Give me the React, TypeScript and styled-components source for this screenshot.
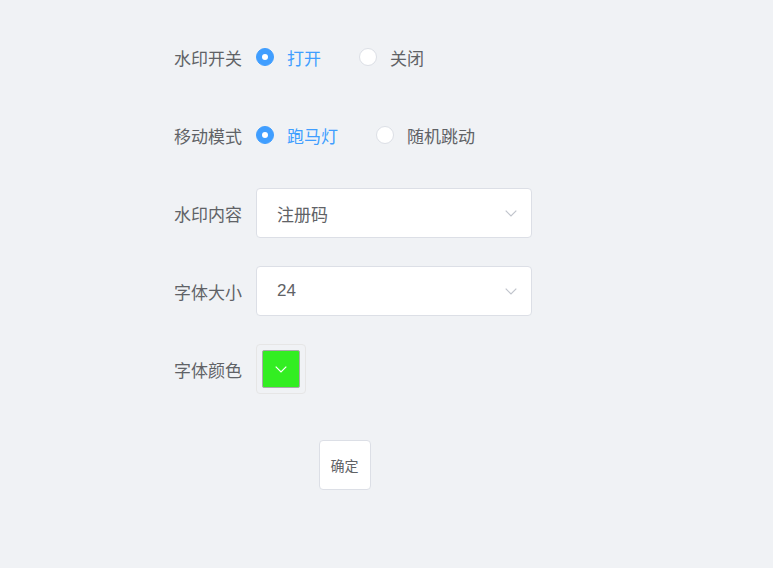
import React, { useState } from 'react'
import styled, { createGlobalStyle } from 'styled-components'

const GlobalStyle = createGlobalStyle`
  html, body {
    margin: 0;
    padding: 0;
    background: #f0f2f5;
  }
  body {
    font-family: "Helvetica Neue", Helvetica, "Liberation Sans", "Noto Sans CJK SC", sans-serif;
    color: #606266;
  }
`

const Page = styled.div`
  min-height: 568px;
  padding: 32px 0 0 157px;
  box-sizing: border-box;
`

const Form = styled.form`
  width: 375px;
  display: flex;
  flex-direction: column;
  gap: 28px;
`

const Item = styled.div`
  display: flex;
  align-items: center;
  height: 50px;
`

const Label = styled.label`
  width: 99px;
  box-sizing: border-box;
  padding-right: 14px;
  text-align: right;
  font-size: 17px;
  color: #606266;
  flex-shrink: 0;
`

const Content = styled.div`
  flex: 1;
  display: flex;
  align-items: center;
`

const RadioWrap = styled.span`
  display: inline-flex;
  align-items: center;
  margin-right: 38px;
  cursor: pointer;
`

const RadioDot = styled.span<{ $checked: boolean }>`
  width: 18px;
  height: 18px;
  box-sizing: border-box;
  border-radius: 50%;
  border: 1px solid ${({ $checked }) => ($checked ? '#409eff' : '#dcdfe6')};
  background: ${({ $checked }) => ($checked ? '#409eff' : '#fff')};
  display: flex;
  align-items: center;
  justify-content: center;

  &::after {
    content: '';
    width: 6px;
    height: 6px;
    border-radius: 50%;
    background: #fff;
    display: ${({ $checked }) => ($checked ? 'block' : 'none')};
  }
`

const RadioText = styled.span<{ $checked: boolean }>`
  padding-left: 13px;
  font-size: 17px;
  color: ${({ $checked }) => ($checked ? '#409eff' : '#606266')};
`

const Select = styled.div`
  width: 276px;
  height: 50px;
  box-sizing: border-box;
  background: #fff;
  border: 1px solid #dcdfe6;
  border-radius: 4px;
  padding: 0 14px 0 20px;
  display: flex;
  align-items: center;
  justify-content: space-between;
  font-size: 17px;
  color: #606266;
`

const Picker = styled.div`
  width: 50px;
  height: 50px;
  box-sizing: border-box;
  border: 1px solid #e6e6e6;
  border-radius: 4px;
  padding: 5px;
`

const Swatch = styled.div<{ $color: string }>`
  width: 100%;
  height: 100%;
  box-sizing: border-box;
  border: 1px solid #aaa;
  border-radius: 2px;
  background: ${({ $color }) => $color};
  display: flex;
  align-items: center;
  justify-content: center;
`

const Footer = styled.div`
  display: flex;
  justify-content: center;
  margin-top: 18px;
`

const Button = styled.button`
  width: 52px;
  height: 50px;
  padding: 0;
  background: #fff;
  border: 1px solid #dcdfe6;
  border-radius: 4px;
  font-family: inherit;
  font-size: 14px;
  color: #606266;
  cursor: pointer;
`

const Arrow = ({ color, size }: { color: string; size: number }) => (
  <svg width={size} height={size / 2 + 1} viewBox="0 0 12 7" fill="none">
    <path d="M0.7 0.7 L6 6 L11.3 0.7" stroke={color} strokeWidth="1.2" />
  </svg>
)

type Option = { value: string; label: string }

function RadioGroup({ options, value, onChange }: { options: Option[]; value: string; onChange: (v: string) => void }) {
  return (
    <>
      {options.map(o => (
        <RadioWrap key={o.value} onClick={() => onChange(o.value)}>
          <RadioDot $checked={o.value === value} />
          <RadioText $checked={o.value === value}>{o.label}</RadioText>
        </RadioWrap>
      ))}
    </>
  )
}

export default function App() {
  const [enabled, setEnabled] = useState('on')
  const [mode, setMode] = useState('marquee')

  return (
    <Page>
      <GlobalStyle />
      <Form onSubmit={e => e.preventDefault()}>
        <Item>
          <Label>水印开关</Label>
          <Content>
            <RadioGroup
              value={enabled}
              onChange={setEnabled}
              options={[
                { value: 'on', label: '打开' },
                { value: 'off', label: '关闭' }
              ]}
            />
          </Content>
        </Item>
        <Item>
          <Label>移动模式</Label>
          <Content>
            <RadioGroup
              value={mode}
              onChange={setMode}
              options={[
                { value: 'marquee', label: '跑马灯' },
                { value: 'random', label: '随机跳动' }
              ]}
            />
          </Content>
        </Item>
        <Item>
          <Label>水印内容</Label>
          <Content>
            <Select>
              <span>注册码</span>
              <Arrow color="#c0c4cc" size={12} />
            </Select>
          </Content>
        </Item>
        <Item>
          <Label>字体大小</Label>
          <Content>
            <Select>
              <span>24</span>
              <Arrow color="#c0c4cc" size={12} />
            </Select>
          </Content>
        </Item>
        <Item>
          <Label>字体颜色</Label>
          <Content>
            <Picker>
              <Swatch $color="#33ee22">
                <Arrow color="#fff" size={12} />
              </Swatch>
            </Picker>
          </Content>
        </Item>
        <Footer>
          <Button type="submit">确定</Button>
        </Footer>
      </Form>
    </Page>
  )
}
